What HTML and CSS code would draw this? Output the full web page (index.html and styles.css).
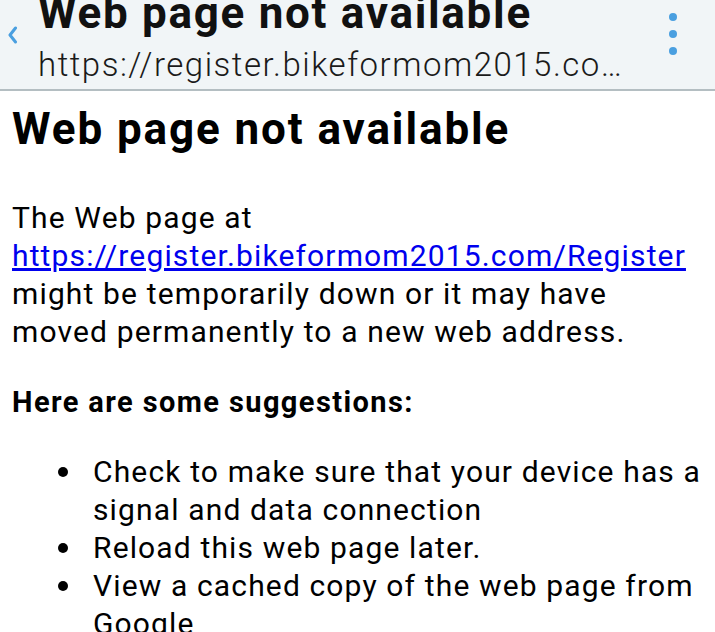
FILE: index.html
```html
<!DOCTYPE html>
<html>
<head>
<meta charset="utf-8">
<link rel="stylesheet" href="styles.css">
</head>
<body>
<header class="bar">
  <div class="back">
    <svg width="12" height="18" viewBox="0 0 12 18"><path d="M8.5 2 L3 9 L8.5 16" fill="none" stroke="#4a9fe0" stroke-width="3" stroke-linecap="round" stroke-linejoin="round"/></svg>
  </div>
  <div class="titles">
    <div class="title">Web page not available</div>
    <div class="url">https://register.bikeformom2015.co…</div>
  </div>
  <div class="menu"><span class="dot"></span><span class="dot"></span><span class="dot"></span></div>
</header>
<main class="content">
  <h1 class="heading">Web page not available</h1>
  <p class="para">The Web page at<br><a class="link" href="#">https://register.bikeformom2015.com/Register</a><br>might be temporarily down or it may have moved permanently to a new web address.</p>
  <p class="sub">Here are some suggestions:</p>
  <ul class="list">
    <li class="item">Check to make sure that your device has a signal and data connection</li>
    <li class="item">Reload this web page later.</li>
    <li class="item">View a cached copy of the web page from Google</li>
  </ul>
</main>
</body>
</html>
```
FILE: styles.css
```css
html, body {
  margin: 0;
  padding: 0;
  background: #ffffff;
  font-family: Roboto, "Noto Sans", sans-serif;
  color: #000;
  overflow: hidden;
}
.bar {
  display: flex;
  align-items: flex-start;
  height: 89px;
  background: #f1f5f7;
  border-bottom: 2px solid #b4bec2;
  overflow: hidden;
}
.back {
  width: 38px;
  padding-top: 26px;
  padding-left: 7px;
  box-sizing: border-box;
}
.back svg { display: block; }
.titles {
  flex: 1;
  min-width: 0;
  margin-top: -9px;
}
.title {
  font-size: 44px;
  line-height: 44px;
  font-weight: 700;
  letter-spacing: 1.7px;
  color: #111;
  white-space: nowrap;
}
.url {
  margin-top: 11px;
  font-size: 33px;
  line-height: 38px;
  font-weight: 300;
  letter-spacing: 1.5px;
  color: #1a1a1a;
  white-space: nowrap;
}
.menu {
  width: 42px;
  flex: none;
  display: flex;
  flex-direction: column;
  align-items: center;
  gap: 9px;
  padding-top: 13px;
  margin-right: 21px;
}
.dot {
  width: 8px;
  height: 8px;
  border-radius: 50%;
  background: #4a9fe0;
}
.content {
  padding: 0 12px;
}
.heading {
  margin: 8px 0 0;
  font-size: 44px;
  line-height: 60px;
  font-weight: 700;
  letter-spacing: 1.9px;
}
.para {
  margin: 40px 0 0;
  font-size: 30px;
  line-height: 38px;
  letter-spacing: 1.14px;
}
.link {
  color: #0000ee;
  text-decoration: underline;
}
.sub {
  margin: 32px 0 0;
  font-size: 29px;
  line-height: 38px;
  font-weight: 700;
  letter-spacing: 1.4px;
}
.list {
  margin: 32px 0 0;
  padding: 0;
  list-style: none;
  font-size: 30px;
  line-height: 38px;
  letter-spacing: 1.14px;
}
.item {
  display: grid;
  grid-template-columns: 81px 1fr;
}
.item::before {
  content: "";
  width: 10px;
  height: 10px;
  border-radius: 50%;
  background: #000;
  margin: 14px 0 0 46px;
}
```
